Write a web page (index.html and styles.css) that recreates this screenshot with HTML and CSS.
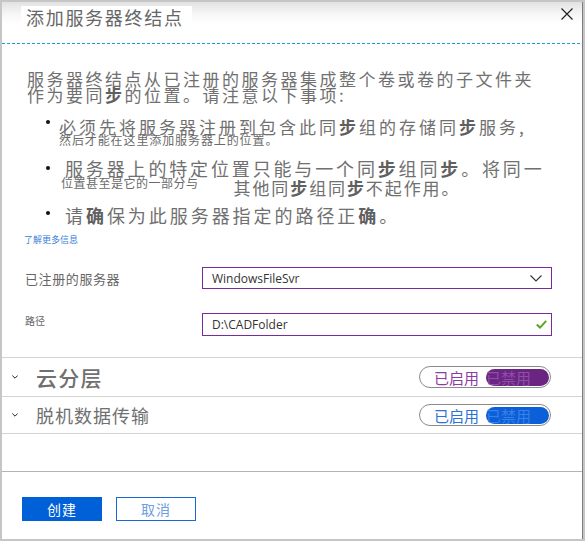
FILE: index.html
```html
<!DOCTYPE html>
<html lang="zh-CN">
<head>
<meta charset="utf-8">
<title>添加服务器终结点</title>
<link rel="stylesheet" href="styles.css">
</head>
<body>
<div class="window">
  <header class="titlebar">
    <h1 class="title">添加服务器终结点</h1>
    <button class="close" aria-label="关闭">
      <svg width="12" height="12" viewBox="0 0 12 12"><path d="M0.5 0.5 L11.5 11.5 M11.5 0.5 L0.5 11.5" stroke="#222" stroke-width="1.2" fill="none"/></svg>
    </button>
  </header>
  <div class="dashed"></div>

  <section class="intro">
    <p class="lead"><span class="ln">服务器终结点从已注册的服务器集成整个卷或卷的子文件夹</span><span class="ln">作为要同<b>步</b>的位置。请注意以下事项:</span></p>
    <ul class="notes">
      <li class="note n1">
        <span class="dot"></span>
        <div class="note-body">
          <span class="main">必须先将服务器注册到包含此同<b>步</b>组的存储同<b>步</b>服务,</span>
          <span class="sub">然后才能在这里添加服务器上的位置。</span>
        </div>
      </li>
      <li class="note n2">
        <span class="dot"></span>
        <div class="note-body">
          <span class="main">服务器上的特定位置只能与一个同<b>步</b>组同<b>步</b>。将同一</span>
          <span class="mixed"><span class="sub">位置甚至是它的一部分与</span><span class="tail">其他同<b>步</b>组同<b>步</b>不起作用。</span></span>
        </div>
      </li>
      <li class="note n3">
        <span class="dot"></span>
        <div class="note-body">
          <span class="main">请<b>确</b>保为此服务器指定的路径正<b>确</b>。</span>
        </div>
      </li>
    </ul>
    <a class="more" href="#">了解更多信息</a>
  </section>

  <div class="fields">
    <div class="field f1">
      <span class="label">已注册的服务器</span>
      <div class="box">
        <span class="value">WindowsFileSvr</span>
        <svg width="12" height="7" viewBox="0 0 12 7"><path d="M0.5 0.5 L6 6 L11.5 0.5" stroke="#333" stroke-width="1.1" fill="none"/></svg>
      </div>
    </div>
    <div class="field f2">
      <span class="label small">路径</span>
      <div class="box">
        <span class="value">D:\CADFolder</span>
        <svg width="11" height="9" viewBox="0 0 11 9"><path d="M0.8 4.6 L4 7.6 L10.2 0.8" stroke="#5ea51e" stroke-width="2" fill="none"/></svg>
      </div>
    </div>
  </div>

  <div class="sections">
    <div class="row r1">
      <svg class="chev" width="6" height="4" viewBox="0 0 6 4"><path d="M0.3 0.5 L3 3.2 L5.7 0.5" stroke="#222" stroke-width="1" fill="none"/></svg>
      <span class="row-title t1">云分层</span>
      <div class="toggle purple"><span class="on">已启用</span><span class="off">已禁用</span></div>
    </div>
    <div class="row r2">
      <svg class="chev" width="6" height="4" viewBox="0 0 6 4"><path d="M0.3 0.5 L3 3.2 L5.7 0.5" stroke="#222" stroke-width="1" fill="none"/></svg>
      <span class="row-title t2">脱机数据传输</span>
      <div class="toggle blue"><span class="on">已启用</span><span class="off">已禁用</span></div>
    </div>
  </div>

  <footer class="footer">
    <button class="btn primary">创建</button>
    <button class="btn secondary">取消</button>
  </footer>
</div>
</body>
</html>
```

FILE: styles.css
```css
* { box-sizing: border-box; }
html, body { margin: 0; padding: 0; }
body {
  background: #c6c6c6;
  width: 585px;
  height: 541px;
  padding: 2px 2px 2px 2px;
  font-family: "Noto Sans CJK SC", "Noto Sans", sans-serif;
  overflow: hidden;
}
.window {
  width: 581px;
  height: 537px;
  background: #fff;
  border-right: 1px solid #7c7c7c;
  display: flex;
  flex-direction: column;
}
.window > * { flex: none; }
.titlebar {
  height: 41px;
  background: linear-gradient(to bottom, #e2e2e2 0px, #f6f6f6 12px, #ffffff 22px);
  display: flex;
  align-items: flex-start;
  justify-content: space-between;
  padding: 4px 9px 0 19px;
}
.title {
  margin: 0;
  background: #fff;
  width: 171px;
  height: 22px;
  padding: 0 0 0 5px;
  font-size: 18px;
  line-height: 22px;
  font-weight: 400;
  letter-spacing: 1.7px;
  color: #666;
  white-space: nowrap;
}
.close {
  border: 0;
  background: transparent;
  padding: 0;
  margin-top: 2px;
  width: 12px;
  height: 12px;
  display: block;
}
.close svg { display: block; }
.dashed {
  height: 1px;
  background: repeating-linear-gradient(to right, #1c9fd6 0 3px, transparent 3px 5px);
}

.intro { padding: 27px 0 0 25px; color: #707070; }
.lead {
  margin: 0;
  font-size: 17px;
  letter-spacing: 2.5px;
  line-height: 16px;
}
.lead .ln { display: block; white-space: nowrap; }
b { font-weight: 700; color: #606060; }

.notes { list-style: none; margin: 16px 0 0 0; padding: 0 0 0 19px; }
.note { display: flex; align-items: flex-start; }
.dot {
  width: 4px; height: 4px; border-radius: 50%;
  background: #111;
  flex: none;
  margin-right: 9px;
}
.note-body { display: flex; flex-direction: column; white-space: nowrap; }
.n1 .dot { margin-top: 1px; }
.n1 .main { font-size: 17px; letter-spacing: 3px; line-height: 15px; }
.sub { font-size: 12px; letter-spacing: 0.9px; line-height: 12px; color: #6a6a6a; }
.n2 { margin-top: 14px; }
.n2 .dot { margin-top: 6px; }
.n2 .note-body { padding-left: 6px; }
.n2 .main { font-size: 18px; letter-spacing: 2.85px; line-height: 17px; }
.mixed { display: flex; align-items: flex-start; }
.n2 .sub { margin-left: -4px; letter-spacing: 0.5px; }
.tail { font-size: 17px; letter-spacing: 1.9px; line-height: 17px; margin-left: 35px; margin-top: 2px; }
.n3 { margin-top: 9px; }
.n3 .dot { margin-top: 6px; }
.n3 .note-body { padding-left: 6px; }
.n3 .main { font-size: 18px; letter-spacing: 2.95px; line-height: 20px; }

.more {
  display: block;
  margin: 10px 0 0 -3px;
  font-size: 9px;
  line-height: 10px;
  color: #3b7fd8;
  text-decoration: none;
}

.fields { padding: 22px 0 0 23px; }
.field { display: flex; align-items: center; }
.label { width: 177px; font-size: 13px; letter-spacing: 0.6px; color: #666; }
.label.small { font-size: 10px; letter-spacing: 0; align-self: flex-start; margin-top: 0; }
.box {
  width: 350px;
  height: 22px;
  border: 1px solid #7a2b9a;
  display: flex;
  align-items: center;
  justify-content: space-between;
  padding: 0 9px 0 9px;
}
.value { font-family: "Open Sans", "Noto Sans", sans-serif; font-size: 12px; color: #333; }
.f2 { margin-top: 24px; }
.f2 .box { height: 23px; padding-right: 4px; }

.sections { margin-top: 21px; border-top: 1px solid #d4d4d4; }
.row {
  display: flex;
  align-items: center;
  border-bottom: 1px solid #d4d4d4;
  padding: 0 31px 0 10px;
}
.r1 { height: 39px; }
.r2 { height: 37px; }
.chev { flex: none; display: block; }
.row-title { color: #707070; margin-left: 18px; flex: 1; }
.t1 { font-size: 21px; letter-spacing: 1.2px; font-weight: 500; }
.t2 { font-size: 18px; letter-spacing: 1px; margin-left: 18px; }
.toggle {
  width: 132px;
  height: 22px;
  border: 1px solid #8a8a8a;
  border-radius: 11px;
  display: flex;
  align-items: center;
  justify-content: space-between;
  padding: 0 1px 0 14px;
  font-size: 15px;
}
.toggle .on { line-height: 17px; }
.toggle .off {
  width: 63px;
  height: 17px;
  border-radius: 9px;
  line-height: 17px;
  white-space: nowrap;
}
.purple .on { color: #8c3ba2; }
.purple .off { background: #6a2482; color: #8e4ea8; }
.blue .on { color: #2a72d8; }
.blue .off { background: #0b5fd8; color: #3a80e6; }

.footer {
  margin-top: 37px;
  border-top: 1px solid #b4b4b4;
  padding: 25px 0 0 20px;
  display: flex;
  gap: 14px;
}
.btn {
  width: 80px;
  height: 24px;
  font-family: "Noto Sans CJK SC", sans-serif;
  font-size: 14px;
  padding: 0;
  letter-spacing: 1px;
}
.primary { background: #0060d8; color: #fff; border: 0; }
.secondary { background: #fff; color: #6c9ee2; border: 1px solid #1a68d8; }
```
